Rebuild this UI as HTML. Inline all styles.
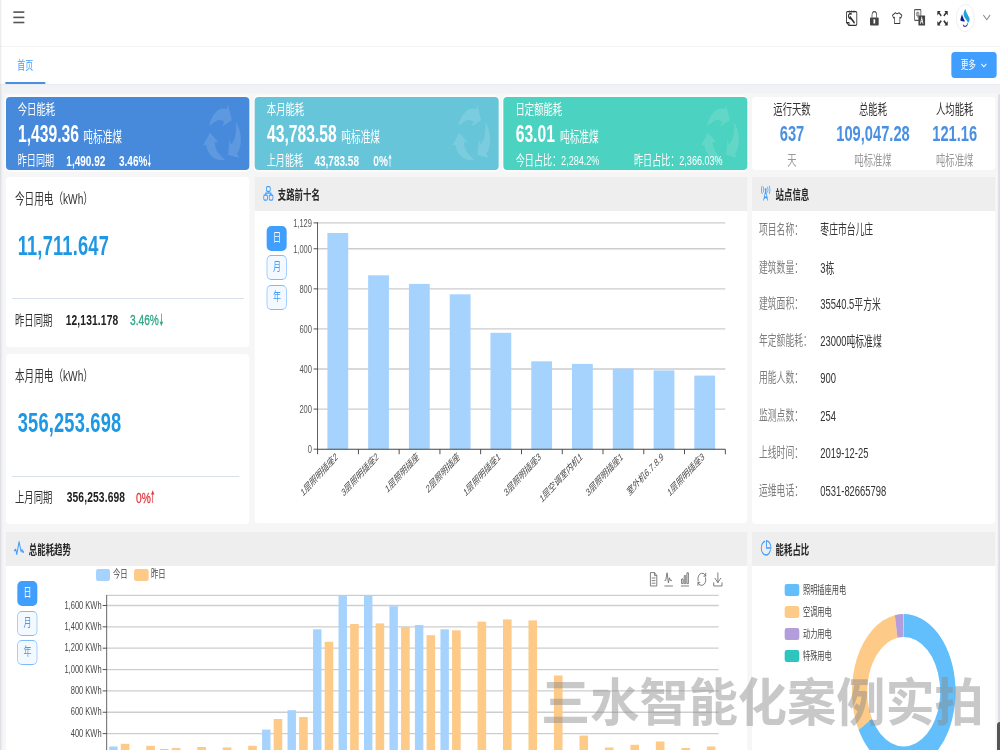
<!DOCTYPE html>
<html lang="zh-CN"><head><meta charset="utf-8"><title>首页</title>
<style>
html,body{margin:0;padding:0;}
body{width:1000px;height:750px;overflow:hidden;position:relative;background:#f0f2f5;
  font-family:"Liberation Sans","Noto Sans CJK SC",sans-serif;font-size:12px;color:#333;}
#stage{filter:blur(0.4px);position:absolute;left:0;top:0;width:1500px;height:750px;overflow:hidden;
  transform:scaleX(0.666667);transform-origin:0 0;background:#f0f2f5;}
svg.ar{height:.88em;width:.4em;vertical-align:-.09em;display:inline-block;overflow:visible;margin-left:.02em;}
.abs{position:absolute;}
.t{position:absolute;white-space:nowrap;}
.b{font-weight:bold;}
.hd{font-weight:bold;}
/* top bar */
.topbar{position:absolute;left:0;top:0;width:1500px;height:47px;background:#fff;border-bottom:1px solid #f5f5f5;box-sizing:border-box;}
.tabbar{position:absolute;left:0;top:47px;width:1500px;height:37px;background:#fff;box-shadow:0 1px 0 #e9ebef;}
.leftline{position:absolute;left:0;top:0;width:1.6px;height:750px;background:rgba(0,0,0,.075);}
.inner{position:absolute;left:5.2px;top:92.8px;width:1491px;height:660px;background:#f6f6f6;}
.tabline{position:absolute;left:8px;top:35px;width:60px;height:2px;background:#4a8fe0;}
.more{position:absolute;left:1427px;top:5px;width:68px;height:26px;border-radius:5px/4px;background:#409eff;color:#fff;}
/* panels */
.card{position:absolute;border-radius:6px/4px;box-shadow:0 0 0 2px rgba(255,255,255,.7);}
.panel{position:absolute;background:#fff;border-radius:6px/4px;overflow:hidden;}
.phead{position:absolute;left:0;top:0;right:0;height:34px;background:#eee;}
.hr{position:absolute;height:1px;background:#d9e0ea;}
.btn{position:absolute;width:30px;height:25px;border-radius:7px/5px;box-sizing:border-box;text-align:center;line-height:24px;font-size:12px;}
.btn.on{background:#409eff;color:#fff;}
.btn.off{background:#f3f9ff;color:#409eff;border:1.2px solid #7dbbff;line-height:22px;}
/* overlays */
.wm{position:absolute;left:541.1px;top:678.2px;transform:scaleY(1.035);transform-origin:0 0;font-size:49.2px;line-height:1;font-weight:bold;font-family:"Liberation Sans","Noto Sans CJK SC",sans-serif;color:rgba(140,140,140,.48);white-space:nowrap;}
.sbtrack{position:absolute;left:997.6px;top:94px;width:3px;height:660px;background:linear-gradient(90deg,#e2e4e8,#d4d8de);border-radius:2px 0 0 0;}
.sbthumb{position:absolute;left:997px;top:722px;width:6px;height:40px;background:#555;border-radius:3px;}

</style></head>
<body>
<div id="stage">
<div class="inner"></div>
<header><div class="topbar"></div><svg style="position:absolute;left:19.8px;top:10.0px;overflow:visible;" width="17" height="14" viewBox="0 0 17 14"><g fill="#555"><rect x="0" y="1.3" width="16.5" height="1.6"/><rect x="0" y="6.6" width="16.5" height="1.6"/><rect x="0" y="11.7" width="16.5" height="1.6"/></g></svg><svg style="position:absolute;left:1268.8px;top:9.6px;overflow:visible;" width="17" height="16" viewBox="0 0 17 16"><g fill="none" stroke="#333" stroke-width="1.3" stroke-linejoin="round"><path d="M2.2 1.6 H14.6 Q16.2 1.6 16.2 3 V14 Q16.2 15.4 14.6 15.4 H4.6 L0.8 12.6 V3 Q0.8 1.6 2.2 1.6Z"/><path d="M0.8 12.6 H4.6 V15.4"/><path d="M5 0.4v2.2M8.5 0.4v2.2M12 0.4v2.2" stroke-width="1.1"/><path d="M6.4 7.2 L12.2 12.6" stroke-width="2.1" stroke-linecap="round"/><path d="M8.4 4.4 A2.7 2.4 0 1 0 7.6 8.2" stroke-width="1.7"/></g></svg><svg style="position:absolute;left:1304.5px;top:10.6px;overflow:visible;" width="13" height="14.4" viewBox="0 0 13 14.4"><path d="M3 6.6 V4.6 Q3 0.7 6.5 0.7 Q10 0.7 10 4.6 V6.6" fill="none" stroke="#444" stroke-width="1.15"/><rect x="0" y="6.4" width="13" height="8" rx="0.8" fill="#444"/><rect x="5.2" y="8.3" width="2.6" height="4.2" fill="#fff"/></svg><svg style="position:absolute;left:1337.7px;top:11.6px;overflow:visible;" width="15.6" height="12.2" viewBox="0 0 15.6 12.2"><path d="M5.2 0.7 Q7.8 2.6 10.4 0.7 L14.9 3.2 L13.3 6 L11.8 5.3 V11.5 H3.8 V5.3 L2.3 6 L0.7 3.2 Z" fill="none" stroke="#333" stroke-width="1.05" stroke-linejoin="round"/></svg><svg style="position:absolute;left:1371.0px;top:9.2px;overflow:visible;" width="16.6" height="16.6" viewBox="0 0 16.6 16.6"><rect x="0.7" y="0.7" width="9.6" height="10.6" rx="0.8" fill="#fff" stroke="#555" stroke-width="1.2"/><path d="M5.5 2.6v6M3.6 3.6h3.8v3H3.6z" fill="none" stroke="#777" stroke-width="0.9"/><rect x="6.6" y="6.6" width="10" height="10" rx="0.6" fill="#444"/><path d="M9.6 14.8 L11.6 8.8 L13.6 14.8 M10.3 12.8 H12.9" fill="none" stroke="#fff" stroke-width="1.1"/></svg><svg style="position:absolute;left:1405.5px;top:10.5px;overflow:visible;" width="15.6" height="14.6" viewBox="0 0 15.6 14.6"><g fill="#333"><path d="M0 0 H5 L3.4 1.4 L6.6 4.2 L5.2 5.6 L2 2.8 L0 4.6 Z"/><path d="M0 0 H5 L3.4 1.4 L6.6 4.2 L5.2 5.6 L2 2.8 L0 4.6 Z" transform="translate(15.6,0) scale(-1,1)"/><path d="M0 0 H5 L3.4 1.4 L6.6 4.2 L5.2 5.6 L2 2.8 L0 4.6 Z" transform="translate(0,14.6) scale(1,-1)"/><path d="M0 0 H5 L3.4 1.4 L6.6 4.2 L5.2 5.6 L2 2.8 L0 4.6 Z" transform="translate(15.6,14.6) scale(-1,-1)"/></g></svg><svg style="position:absolute;left:1434.4px;top:3.7px;overflow:visible;" width="28" height="28" viewBox="0 0 28 28"><circle cx="14" cy="14.05" r="13.6" fill="#fff" stroke="#ececf1" stroke-width="1"/><path d="M14.15 4.7C11.5 7.5 10.6 10 12.2 12.6C13.5 14.6 16.5 16.5 18.05 18.9C19.6 18 20.8 16.8 20.3 14.8C19.6 12 15.4 9.5 14.15 4.7Z" fill="#1fa2de"/><path d="M9.05 10.2C8 12 6.8 14.5 6.5 16.5C8.5 17.3 11 17.6 13.4 17.4C12.5 15.5 10.2 13.5 9.05 10.2Z" fill="#17188a"/><path d="M16.9 19.3A3.3 2.4 0 1 1 10.5 20.6" fill="none" stroke="#2a2a95" stroke-width="1.1"/></svg><svg style="position:absolute;left:1474.6px;top:15.0px;overflow:visible;" width="10.3" height="5" viewBox="0 0 10.3 5"><path d="M0 0 L5.15 4.8 L10.3 0" fill="none" stroke="#888" stroke-width="1.2"/></svg></header><nav><div class="tabbar"><div class="tabline"></div><div class="more"></div></div><div class="t" style="left:26.0px;top:58.2px;font-size:12px;line-height:17px;color:#409eff;">首页</div><div class="t" style="left:1441.0px;top:57.0px;font-size:11.5px;line-height:16px;color:#fff;">更多</div><svg style="position:absolute;left:1471.5px;top:63.6px;overflow:visible;" width="7.6" height="3" viewBox="0 0 7.6 3"><path d="M0 0 L3.8 2.8 L7.6 0" fill="none" stroke="#fff" stroke-width="1.1"/></svg></nav><section class="stats"><div class="card" style="position:absolute;left:8.5px;top:97.0px;width:365.5px;height:72.5px;background:#478adc;"></div><svg style="position:absolute;left:335.0px;top:136.0px;overflow:visible;" width="1" height="1" viewBox="0 0 1 1"><g fill="#fff" fill-opacity=".13"><path d="M-21.5,-9.7 C-20,-16 -14,-23 -8.4,-25.6 C-4,-27.6 1,-28 5.1,-26.6 L7,-31.2 L12.8,-15.8 L-2,-9.4 L1.6,-14.1 C-3,-16.6 -8,-16.6 -13,-14.1 C-16,-13 -19,-11.5 -21.5,-9.7 Z" transform="rotate(0)"/><path d="M-21.5,-9.7 C-20,-16 -14,-23 -8.4,-25.6 C-4,-27.6 1,-28 5.1,-26.6 L7,-31.2 L12.8,-15.8 L-2,-9.4 L1.6,-14.1 C-3,-16.6 -8,-16.6 -13,-14.1 C-16,-13 -19,-11.5 -21.5,-9.7 Z" transform="rotate(120)"/><path d="M-21.5,-9.7 C-20,-16 -14,-23 -8.4,-25.6 C-4,-27.6 1,-28 5.1,-26.6 L7,-31.2 L12.8,-15.8 L-2,-9.4 L1.6,-14.1 C-3,-16.6 -8,-16.6 -13,-14.1 C-16,-13 -19,-11.5 -21.5,-9.7 Z" transform="rotate(240)"/></g></svg><div class="t" style="left:26.7px;top:99.0px;font-size:14px;line-height:20px;color:#fff;">今日能耗</div><div class="t" style="left:27.0px;top:117.9px;font-size:23.5px;line-height:33px;color:#fff;font-weight:bold;">1,439.36</div><div class="t" style="left:125.0px;top:127.0px;font-size:14.5px;line-height:20px;color:#fff;">吨标准煤</div><div class="t" style="left:26.7px;top:150.7px;font-size:13.6px;line-height:19px;color:#fff;">昨日同期</div><div class="t" style="left:99.5px;top:149.7px;font-size:15px;line-height:21px;color:#fff;font-weight:bold;">1,490.92</div><div class="t" style="left:178.5px;top:149.7px;font-size:15px;line-height:21px;color:#fff;font-weight:bold;">3.46%<svg class="ar" viewBox="0 0 6 13" role="img" aria-label="↓"><title>↓</title><path d="M3 0.3V10.5" fill="none" stroke="currentColor" stroke-width="1.1"/><path d="M0.5 8.6H5.5L3 12.8Z" fill="currentColor"/></svg></div><div class="card" style="position:absolute;left:382.0px;top:97.0px;width:365.5px;height:72.5px;background:#67c5da;"></div><svg style="position:absolute;left:708.5px;top:136.0px;overflow:visible;" width="1" height="1" viewBox="0 0 1 1"><g fill="#fff" fill-opacity=".13"><path d="M-21.5,-9.7 C-20,-16 -14,-23 -8.4,-25.6 C-4,-27.6 1,-28 5.1,-26.6 L7,-31.2 L12.8,-15.8 L-2,-9.4 L1.6,-14.1 C-3,-16.6 -8,-16.6 -13,-14.1 C-16,-13 -19,-11.5 -21.5,-9.7 Z" transform="rotate(0)"/><path d="M-21.5,-9.7 C-20,-16 -14,-23 -8.4,-25.6 C-4,-27.6 1,-28 5.1,-26.6 L7,-31.2 L12.8,-15.8 L-2,-9.4 L1.6,-14.1 C-3,-16.6 -8,-16.6 -13,-14.1 C-16,-13 -19,-11.5 -21.5,-9.7 Z" transform="rotate(120)"/><path d="M-21.5,-9.7 C-20,-16 -14,-23 -8.4,-25.6 C-4,-27.6 1,-28 5.1,-26.6 L7,-31.2 L12.8,-15.8 L-2,-9.4 L1.6,-14.1 C-3,-16.6 -8,-16.6 -13,-14.1 C-16,-13 -19,-11.5 -21.5,-9.7 Z" transform="rotate(240)"/></g></svg><div class="t" style="left:400.2px;top:99.0px;font-size:14px;line-height:20px;color:#fff;">本月能耗</div><div class="t" style="left:400.5px;top:117.9px;font-size:23.5px;line-height:33px;color:#fff;font-weight:bold;">43,783.58</div><div class="t" style="left:512.0px;top:127.0px;font-size:14.5px;line-height:20px;color:#fff;">吨标准煤</div><div class="t" style="left:400.2px;top:150.7px;font-size:13.6px;line-height:19px;color:#fff;">上月能耗</div><div class="t" style="left:471.7px;top:149.7px;font-size:15px;line-height:21px;color:#fff;font-weight:bold;">43,783.58</div><div class="t" style="left:560.0px;top:149.7px;font-size:15px;line-height:21px;color:#fff;font-weight:bold;">0%<svg class="ar" viewBox="0 0 6 13" role="img" aria-label="↑"><title>↑</title><path d="M3 12.7V2.5" fill="none" stroke="currentColor" stroke-width="1.1"/><path d="M0.5 4.4H5.5L3 0.2Z" fill="currentColor"/></svg></div><div class="card" style="position:absolute;left:755.0px;top:97.0px;width:365.5px;height:72.5px;background:#4bd2c0;"></div><svg style="position:absolute;left:1081.5px;top:136.0px;overflow:visible;" width="1" height="1" viewBox="0 0 1 1"><g fill="#fff" fill-opacity=".13"><path d="M-21.5,-9.7 C-20,-16 -14,-23 -8.4,-25.6 C-4,-27.6 1,-28 5.1,-26.6 L7,-31.2 L12.8,-15.8 L-2,-9.4 L1.6,-14.1 C-3,-16.6 -8,-16.6 -13,-14.1 C-16,-13 -19,-11.5 -21.5,-9.7 Z" transform="rotate(0)"/><path d="M-21.5,-9.7 C-20,-16 -14,-23 -8.4,-25.6 C-4,-27.6 1,-28 5.1,-26.6 L7,-31.2 L12.8,-15.8 L-2,-9.4 L1.6,-14.1 C-3,-16.6 -8,-16.6 -13,-14.1 C-16,-13 -19,-11.5 -21.5,-9.7 Z" transform="rotate(120)"/><path d="M-21.5,-9.7 C-20,-16 -14,-23 -8.4,-25.6 C-4,-27.6 1,-28 5.1,-26.6 L7,-31.2 L12.8,-15.8 L-2,-9.4 L1.6,-14.1 C-3,-16.6 -8,-16.6 -13,-14.1 C-16,-13 -19,-11.5 -21.5,-9.7 Z" transform="rotate(240)"/></g></svg><div class="t" style="left:773.2px;top:99.0px;font-size:14px;line-height:20px;color:#fff;">日定额能耗</div><div class="t" style="left:773.5px;top:117.9px;font-size:23.5px;line-height:33px;color:#fff;font-weight:bold;">63.01</div><div class="t" style="left:840.0px;top:127.0px;font-size:14.5px;line-height:20px;color:#fff;">吨标准煤</div><div class="t" style="left:773.7px;top:150.7px;font-size:13.6px;line-height:19px;color:#fff;">今日占比：2,284.2%</div><div class="t" style="left:951.0px;top:150.7px;font-size:13.6px;line-height:19px;color:#fff;">昨日占比：2,366.03%</div><div class="panel" style="position:absolute;left:1128.0px;top:97.0px;width:364.5px;height:72.5px;"></div><div class="t" style="left:1188.0px;top:99.0px;font-size:14px;line-height:20px;color:#333;transform:translateX(-50%);">运行天数</div><div class="t" style="left:1188.0px;top:118.0px;font-size:22px;line-height:31px;color:#4a90e2;font-weight:bold;transform:translateX(-50%);">637</div><div class="t" style="left:1188.0px;top:150.0px;font-size:14px;line-height:20px;color:#999;transform:translateX(-50%);">天</div><div class="t" style="left:1309.5px;top:99.0px;font-size:14px;line-height:20px;color:#333;transform:translateX(-50%);">总能耗</div><div class="t" style="left:1309.5px;top:118.0px;font-size:22px;line-height:31px;color:#4a90e2;font-weight:bold;transform:translateX(-50%);">109,047.28</div><div class="t" style="left:1309.5px;top:150.0px;font-size:14px;line-height:20px;color:#999;transform:translateX(-50%);">吨标准煤</div><div class="t" style="left:1432.0px;top:99.0px;font-size:14px;line-height:20px;color:#333;transform:translateX(-50%);">人均能耗</div><div class="t" style="left:1432.0px;top:118.0px;font-size:22px;line-height:31px;color:#4a90e2;font-weight:bold;transform:translateX(-50%);">121.16</div><div class="t" style="left:1432.0px;top:150.0px;font-size:14px;line-height:20px;color:#999;transform:translateX(-50%);">吨标准煤</div></section>
<main>
<section class="elec"><div class="panel" style="position:absolute;left:8.5px;top:177.0px;width:365.5px;height:170.0px;"></div><div class="t" style="left:22.5px;top:188.6px;font-size:14.4px;line-height:20px;color:#333;">今日用电（<span style="font-size:106%">kWh</span>）</div><div class="t" style="left:26.5px;top:226.5px;font-size:27.4px;line-height:38px;color:#1e98e4;font-weight:bold;letter-spacing:.3px;">11,711.647</div><div class="hr" style="position:absolute;left:18.0px;top:298.4px;width:348.0px;height:1.0px;"></div><div class="t" style="left:22.5px;top:309.5px;font-size:14px;line-height:20px;color:#333;">昨日同期</div><div class="t" style="left:98.5px;top:308.5px;font-size:15.4px;line-height:22px;color:#222;font-weight:bold;letter-spacing:.2px;">12,131.178</div><div class="t" style="left:195.0px;top:309.0px;font-size:15.3px;line-height:21px;color:#2ea583;-webkit-text-stroke:0.3px #2ea583;">3.46%<svg class="ar" viewBox="0 0 6 13" role="img" aria-label="↓"><title>↓</title><path d="M3 0.3V10.5" fill="none" stroke="currentColor" stroke-width="1.1"/><path d="M0.5 8.6H5.5L3 12.8Z" fill="currentColor"/></svg></div><div class="panel" style="position:absolute;left:8.5px;top:354.0px;width:365.5px;height:170.0px;"></div><div class="t" style="left:22.5px;top:366.0px;font-size:14.4px;line-height:20px;color:#333;">本月用电（<span style="font-size:106%">kWh</span>）</div><div class="t" style="left:26.5px;top:404.0px;font-size:27.4px;line-height:38px;color:#1e98e4;font-weight:bold;letter-spacing:.3px;">356,253.698</div><div class="hr" style="position:absolute;left:18.0px;top:476.2px;width:341.4px;height:1.0px;"></div><div class="t" style="left:22.5px;top:487.0px;font-size:14px;line-height:20px;color:#333;">上月同期</div><div class="t" style="left:100.0px;top:486.0px;font-size:15.4px;line-height:22px;color:#222;font-weight:bold;letter-spacing:.2px;">356,253.698</div><div class="t" style="left:204.0px;top:486.5px;font-size:15.3px;line-height:21px;color:#e0393e;-webkit-text-stroke:0.3px #e0393e;">0%<svg class="ar" viewBox="0 0 6 13" role="img" aria-label="↑"><title>↑</title><path d="M3 12.7V2.5" fill="none" stroke="currentColor" stroke-width="1.1"/><path d="M0.5 4.4H5.5L3 0.2Z" fill="currentColor"/></svg></div></section><section class="top10"><div class="panel" style="position:absolute;left:381.6px;top:177.3px;width:739.0px;height:346.0px;"></div><div class="" style="position:absolute;left:381.6px;top:177.3px;width:739.0px;height:33.6px;background:#eee;border-radius:6px/4px 6px/4px 0 0;"></div><svg style="position:absolute;left:394.5px;top:186.0px;overflow:visible;" width="15" height="14.8" viewBox="0 0 15 14.8"><g fill="none" stroke="#409eff" stroke-width="1.3"><rect x="4.6" y="0.6" width="5.8" height="4.8" rx="1.6"/><rect x="0.6" y="9" width="5.6" height="5.2" rx="1.6"/><rect x="8.8" y="9" width="5.6" height="5.2" rx="1.6"/><path d="M7.5 5.4V7.2M3.4 9V7.2H11.6V9"/></g></svg><div class="t hd" style="left:416.7px;top:185.6px;font-size:12.6px;line-height:18px;color:#262626;">支路前十名</div><div class="btn on" style="left:400.4px;top:225.9px;">日</div><div class="btn off" style="left:400.4px;top:255.4px;">月</div><div class="btn off" style="left:400.4px;top:285.1px;">年</div><svg style="position:absolute;left:0;top:0;overflow:visible" width="1500" height="750"><path d="M476.4 409.11H1088.0" stroke="#cdcdd0" stroke-width="1.3"/><path d="M476.4 369.02H1088.0" stroke="#cdcdd0" stroke-width="1.3"/><path d="M476.4 328.93H1088.0" stroke="#cdcdd0" stroke-width="1.3"/><path d="M476.4 288.85H1088.0" stroke="#cdcdd0" stroke-width="1.3"/><path d="M476.4 248.76H1088.0" stroke="#cdcdd0" stroke-width="1.3"/><path d="M476.4 222.90H1088.0" stroke="#cdcdd0" stroke-width="1.3"/><rect x="491.1" y="233.0" width="31.2" height="216.2" fill="#a6d3fd"/><rect x="552.2" y="275.3" width="31.2" height="173.9" fill="#a6d3fd"/><rect x="613.4" y="283.9" width="31.2" height="165.3" fill="#a6d3fd"/><rect x="674.6" y="294.3" width="31.2" height="154.9" fill="#a6d3fd"/><rect x="735.7" y="332.8" width="31.2" height="116.4" fill="#a6d3fd"/><rect x="796.9" y="361.3" width="31.2" height="87.9" fill="#a6d3fd"/><rect x="858.0" y="363.9" width="31.2" height="85.3" fill="#a6d3fd"/><rect x="919.2" y="368.6" width="31.2" height="80.6" fill="#a6d3fd"/><rect x="980.4" y="370.4" width="31.2" height="78.8" fill="#a6d3fd"/><rect x="1041.5" y="375.6" width="31.2" height="73.6" fill="#a6d3fd"/><path d="M476.4 222.3V449.8" stroke="#444" stroke-width="1.3"/><path d="M476.4 449.2H1088.0" stroke="#444" stroke-width="1.1"/><path d="M470.4 449.20H476.4" stroke="#333" stroke-width="1"/><path d="M470.4 409.11H476.4" stroke="#333" stroke-width="1"/><path d="M470.4 369.02H476.4" stroke="#333" stroke-width="1"/><path d="M470.4 328.93H476.4" stroke="#333" stroke-width="1"/><path d="M470.4 288.85H476.4" stroke="#333" stroke-width="1"/><path d="M470.4 248.76H476.4" stroke="#333" stroke-width="1"/><path d="M470.4 222.90H476.4" stroke="#333" stroke-width="1"/><path d="M476.4 449.2V454.2" stroke="#444" stroke-width="1.4"/><path d="M537.6 449.2V454.2" stroke="#444" stroke-width="1.4"/><path d="M598.7 449.2V454.2" stroke="#444" stroke-width="1.4"/><path d="M659.9 449.2V454.2" stroke="#444" stroke-width="1.4"/><path d="M721.0 449.2V454.2" stroke="#444" stroke-width="1.4"/><path d="M782.2 449.2V454.2" stroke="#444" stroke-width="1.4"/><path d="M843.4 449.2V454.2" stroke="#444" stroke-width="1.4"/><path d="M904.5 449.2V454.2" stroke="#444" stroke-width="1.4"/><path d="M965.7 449.2V454.2" stroke="#444" stroke-width="1.4"/><path d="M1026.8 449.2V454.2" stroke="#444" stroke-width="1.4"/><path d="M1088.0 449.2V454.2" stroke="#444" stroke-width="1.4"/></svg><div class="t" style="left:468.0px;top:441.2px;font-size:11.3px;line-height:16px;color:#555;transform:translateX(-100%);">0</div><div class="t" style="left:468.0px;top:401.1px;font-size:11.3px;line-height:16px;color:#555;transform:translateX(-100%);">200</div><div class="t" style="left:468.0px;top:361.0px;font-size:11.3px;line-height:16px;color:#555;transform:translateX(-100%);">400</div><div class="t" style="left:468.0px;top:320.9px;font-size:11.3px;line-height:16px;color:#555;transform:translateX(-100%);">600</div><div class="t" style="left:468.0px;top:280.8px;font-size:11.3px;line-height:16px;color:#555;transform:translateX(-100%);">800</div><div class="t" style="left:468.0px;top:240.8px;font-size:11.3px;line-height:16px;color:#555;transform:translateX(-100%);">1,000</div><div class="t" style="left:468.0px;top:214.9px;font-size:11.3px;line-height:16px;color:#555;transform:translateX(-100%);">1,129</div><div class="t" style="left:504.6px;top:455.4px;font-size:10.7px;line-height:14px;color:#484848;transform:translate(-100%,-50%) rotate(-36deg);transform-origin:100% 50%;">1层照明插座2</div><div class="t" style="left:565.7px;top:455.4px;font-size:10.7px;line-height:14px;color:#484848;transform:translate(-100%,-50%) rotate(-36deg);transform-origin:100% 50%;">3层照明插座2</div><div class="t" style="left:626.9px;top:455.4px;font-size:10.7px;line-height:14px;color:#484848;transform:translate(-100%,-50%) rotate(-36deg);transform-origin:100% 50%;">1层照明插座</div><div class="t" style="left:688.1px;top:455.4px;font-size:10.7px;line-height:14px;color:#484848;transform:translate(-100%,-50%) rotate(-36deg);transform-origin:100% 50%;">2层照明插座</div><div class="t" style="left:749.2px;top:455.4px;font-size:10.7px;line-height:14px;color:#484848;transform:translate(-100%,-50%) rotate(-36deg);transform-origin:100% 50%;">1层照明插座1</div><div class="t" style="left:810.4px;top:455.4px;font-size:10.7px;line-height:14px;color:#484848;transform:translate(-100%,-50%) rotate(-36deg);transform-origin:100% 50%;">3层照明插座3</div><div class="t" style="left:871.5px;top:455.4px;font-size:10.7px;line-height:14px;color:#484848;transform:translate(-100%,-50%) rotate(-36deg);transform-origin:100% 50%;">1层空调室内机1</div><div class="t" style="left:932.7px;top:455.4px;font-size:10.7px;line-height:14px;color:#484848;transform:translate(-100%,-50%) rotate(-36deg);transform-origin:100% 50%;">3层照明插座1</div><div class="t" style="left:993.9px;top:455.4px;font-size:10.7px;line-height:14px;color:#484848;transform:translate(-100%,-50%) rotate(-36deg);transform-origin:100% 50%;">室外机6.7.8.9</div><div class="t" style="left:1055.0px;top:455.4px;font-size:10.7px;line-height:14px;color:#484848;transform:translate(-100%,-50%) rotate(-36deg);transform-origin:100% 50%;">1层照明插座3</div></section><section class="site"><div class="panel" style="position:absolute;left:1128.0px;top:177.2px;width:364.5px;height:346.4px;"></div><div class="" style="position:absolute;left:1128.0px;top:177.2px;width:364.5px;height:33.6px;background:#eee;border-radius:6px/4px 6px/4px 0 0;"></div><svg style="position:absolute;left:1141.0px;top:186.0px;overflow:visible;" width="15" height="14.6" viewBox="0 0 15 14.6"><g fill="none" stroke="#409eff" stroke-width="1.1" stroke-linecap="round"><path d="M7.5 4.4 L4.4 14.2 M7.5 4.4 L10.6 14.2 M5.6 10.4 L10 12.6 M9.4 10.4 L5 12.6 M6.4 7.8H8.6"/><circle cx="7.5" cy="3.6" r="0.9" fill="#409eff"/><path d="M4.6 1.2 Q3.2 3.6 4.6 6 M10.4 1.2 Q11.8 3.6 10.4 6"/><path d="M2.2 0.2 Q-0.2 3.6 2.2 7.4 M12.8 0.2 Q15.2 3.6 12.8 7.4"/></g></svg><div class="t hd" style="left:1163.4px;top:185.6px;font-size:12.6px;line-height:18px;color:#262626;">站点信息</div><div class="t" style="left:1138.5px;top:221.4px;font-size:13.2px;line-height:18px;color:#7c7c7c;">项目名称：</div><div class="t" style="left:1230.5px;top:221.4px;font-size:13.2px;line-height:18px;color:#333;">枣庄市台儿庄</div><div class="t" style="left:1138.5px;top:258.7px;font-size:13.2px;line-height:18px;color:#7c7c7c;">建筑数量：</div><div class="t" style="left:1230.5px;top:258.7px;font-size:13.2px;line-height:18px;color:#333;"><span style="font-size:107%">3</span>栋</div><div class="t" style="left:1138.5px;top:295.2px;font-size:13.2px;line-height:18px;color:#7c7c7c;">建筑面积：</div><div class="t" style="left:1230.5px;top:295.2px;font-size:13.2px;line-height:18px;color:#333;"><span style="font-size:107%">35540.5</span>平方米</div><div class="t" style="left:1138.5px;top:332.0px;font-size:13.2px;line-height:18px;color:#7c7c7c;">年定额能耗：</div><div class="t" style="left:1230.5px;top:332.0px;font-size:13.2px;line-height:18px;color:#333;"><span style="font-size:107%">23000</span>吨标准煤</div><div class="t" style="left:1138.5px;top:369.0px;font-size:13.2px;line-height:18px;color:#7c7c7c;">用能人数：</div><div class="t" style="left:1230.5px;top:369.0px;font-size:13.2px;line-height:18px;color:#333;"><span style="font-size:107%">900</span></div><div class="t" style="left:1138.5px;top:406.5px;font-size:13.2px;line-height:18px;color:#7c7c7c;">监测点数：</div><div class="t" style="left:1230.5px;top:406.5px;font-size:13.2px;line-height:18px;color:#333;"><span style="font-size:107%">254</span></div><div class="t" style="left:1138.5px;top:443.7px;font-size:13.2px;line-height:18px;color:#7c7c7c;">上线时间：</div><div class="t" style="left:1230.5px;top:443.7px;font-size:13.2px;line-height:18px;color:#333;"><span style="font-size:107%">2019-12-25</span></div><div class="t" style="left:1138.5px;top:481.7px;font-size:13.2px;line-height:18px;color:#7c7c7c;">运维电话：</div><div class="t" style="left:1230.5px;top:481.7px;font-size:13.2px;line-height:18px;color:#333;"><span style="font-size:107%">0531-82665798</span></div></section>
<section class="trend"><div class="panel" style="position:absolute;left:8.5px;top:532.0px;width:1112.0px;height:230.0px;"></div><div class="" style="position:absolute;left:8.5px;top:532.0px;width:1112.0px;height:33.7px;background:#eee;border-radius:6px/4px 6px/4px 0 0;"></div><svg style="position:absolute;left:21.3px;top:541.0px;overflow:visible;" width="15" height="14" viewBox="0 0 15 14"><path d="M0.6 9.6 L2.6 8.4 L4.2 13.2 L7.6 0.8 L10.6 10.6 L12 8.6 L13.4 10.8" fill="none" stroke="#409eff" stroke-width="1.5" stroke-linejoin="round" stroke-linecap="round"/><circle cx="13.8" cy="10.9" r="1.1" fill="#409eff"/></svg><div class="t hd" style="left:43.3px;top:541.1px;font-size:12.6px;line-height:18px;color:#262626;">总能耗趋势</div><div class="btn on" style="left:26.3px;top:580.7px;">日</div><div class="btn off" style="left:26.3px;top:610.5px;">月</div><div class="btn off" style="left:26.3px;top:640.1px;">年</div><div class="" style="position:absolute;left:143.5px;top:569.0px;width:21.2px;height:11.8px;background:#a6d3fd;border-radius:3px;"></div><div class="t" style="left:169.5px;top:567.1px;font-size:11px;line-height:15px;color:#444;">今日</div><div class="" style="position:absolute;left:200.5px;top:569.0px;width:22.2px;height:11.8px;background:#fdca88;border-radius:3px;"></div><div class="t" style="left:226.5px;top:567.1px;font-size:11px;line-height:15px;color:#444;">昨日</div><svg style="position:absolute;left:0;top:0;overflow:visible" width="1500" height="750"><path d="M160.0 595.3H1078.0" stroke="#cdcdd0" stroke-width="1.3"/><path d="M160.0 733.60H1078.0" stroke="#cdcdd0" stroke-width="1.3"/><path d="M160.0 712.25H1078.0" stroke="#cdcdd0" stroke-width="1.3"/><path d="M160.0 690.90H1078.0" stroke="#cdcdd0" stroke-width="1.3"/><path d="M160.0 669.55H1078.0" stroke="#cdcdd0" stroke-width="1.3"/><path d="M160.0 648.20H1078.0" stroke="#cdcdd0" stroke-width="1.3"/><path d="M160.0 626.85H1078.0" stroke="#cdcdd0" stroke-width="1.3"/><path d="M160.0 605.50H1078.0" stroke="#cdcdd0" stroke-width="1.3"/><rect x="163.8" y="746.5" width="12.6" height="13.5" fill="#a6d3fd"/><rect x="240.2" y="749.0" width="12.6" height="11.0" fill="#a6d3fd"/><rect x="393.1" y="729.6" width="12.6" height="30.4" fill="#a6d3fd"/><rect x="431.3" y="710.2" width="12.6" height="49.8" fill="#a6d3fd"/><rect x="469.6" y="629.3" width="12.6" height="130.7" fill="#a6d3fd"/><rect x="507.8" y="595.3" width="12.6" height="164.7" fill="#a6d3fd"/><rect x="546.0" y="595.3" width="12.6" height="164.7" fill="#a6d3fd"/><rect x="584.2" y="606.2" width="12.6" height="153.8" fill="#a6d3fd"/><rect x="622.4" y="625.0" width="12.6" height="135.0" fill="#a6d3fd"/><rect x="660.7" y="629.3" width="12.6" height="130.7" fill="#a6d3fd"/><rect x="181.2" y="743.8" width="12.9" height="16.2" fill="#fdca88"/><rect x="219.4" y="745.8" width="12.9" height="14.2" fill="#fdca88"/><rect x="257.6" y="748.0" width="12.9" height="12.0" fill="#fdca88"/><rect x="295.9" y="747.0" width="12.9" height="13.0" fill="#fdca88"/><rect x="334.1" y="747.5" width="12.9" height="12.5" fill="#fdca88"/><rect x="372.3" y="745.8" width="12.9" height="14.2" fill="#fdca88"/><rect x="410.5" y="719.0" width="12.9" height="41.0" fill="#fdca88"/><rect x="448.7" y="717.0" width="12.9" height="43.0" fill="#fdca88"/><rect x="487.0" y="641.8" width="12.9" height="118.2" fill="#fdca88"/><rect x="525.2" y="624.0" width="12.9" height="136.0" fill="#fdca88"/><rect x="563.4" y="623.4" width="12.9" height="136.6" fill="#fdca88"/><rect x="601.6" y="627.0" width="12.9" height="133.0" fill="#fdca88"/><rect x="639.8" y="635.2" width="12.9" height="124.8" fill="#fdca88"/><rect x="678.1" y="630.3" width="12.9" height="129.7" fill="#fdca88"/><rect x="716.3" y="621.7" width="12.9" height="138.3" fill="#fdca88"/><rect x="754.5" y="619.4" width="12.9" height="140.6" fill="#fdca88"/><rect x="792.7" y="620.4" width="12.9" height="139.6" fill="#fdca88"/><rect x="830.9" y="675.5" width="12.9" height="84.5" fill="#fdca88"/><rect x="869.2" y="735.6" width="12.9" height="24.4" fill="#fdca88"/><rect x="907.4" y="747.5" width="12.9" height="12.5" fill="#fdca88"/><rect x="945.6" y="744.8" width="12.9" height="15.2" fill="#fdca88"/><rect x="983.8" y="741.5" width="12.9" height="18.5" fill="#fdca88"/><rect x="1022.0" y="748.0" width="12.9" height="12.0" fill="#fdca88"/><rect x="1060.3" y="746.5" width="12.9" height="13.5" fill="#fdca88"/><path d="M160.0 595V760" stroke="#666" stroke-width="1.5"/><path d="M154.0 733.60H160.0" stroke="#333" stroke-width="1"/><path d="M154.0 712.25H160.0" stroke="#333" stroke-width="1"/><path d="M154.0 690.90H160.0" stroke="#333" stroke-width="1"/><path d="M154.0 669.55H160.0" stroke="#333" stroke-width="1"/><path d="M154.0 648.20H160.0" stroke="#333" stroke-width="1"/><path d="M154.0 626.85H160.0" stroke="#333" stroke-width="1"/><path d="M154.0 605.50H160.0" stroke="#333" stroke-width="1"/></svg><div class="t" style="left:152.5px;top:724.6px;font-size:11.3px;line-height:16px;color:#4a4a4a;transform:translateX(-100%);">400 KWh</div><div class="t" style="left:152.5px;top:703.2px;font-size:11.3px;line-height:16px;color:#4a4a4a;transform:translateX(-100%);">600 KWh</div><div class="t" style="left:152.5px;top:681.9px;font-size:11.3px;line-height:16px;color:#4a4a4a;transform:translateX(-100%);">800 KWh</div><div class="t" style="left:152.5px;top:660.5px;font-size:11.3px;line-height:16px;color:#4a4a4a;transform:translateX(-100%);">1,000 KWh</div><div class="t" style="left:152.5px;top:639.2px;font-size:11.3px;line-height:16px;color:#4a4a4a;transform:translateX(-100%);">1,200 KWh</div><div class="t" style="left:152.5px;top:617.9px;font-size:11.3px;line-height:16px;color:#4a4a4a;transform:translateX(-100%);">1,400 KWh</div><div class="t" style="left:152.5px;top:596.5px;font-size:11.3px;line-height:16px;color:#4a4a4a;transform:translateX(-100%);">1,600 KWh</div><svg style="position:absolute;left:974.6px;top:572.1px;overflow:visible;" width="10.8" height="14.6" viewBox="0 0 10.8 14.6"><g fill="none" stroke="#666" stroke-width="1"><path d="M0.6 0.6H6.8L10.2 3.6V14H0.6Z M6.8 0.6V3.6H10.2 M2.6 6H8.2 M2.6 8.6H8.2 M2.6 11.2H8.2"/></g></svg><svg style="position:absolute;left:995.8px;top:572.1px;overflow:visible;" width="13.9" height="14.6" viewBox="0 0 13.9 14.6"><g fill="none" stroke="#666" stroke-width="1"><path d="M0.8 8.4H2.6L4.6 0.8L6.6 10.8L8.2 5.8L9.6 8.4H12 M0.6 14H13.3"/></g></svg><svg style="position:absolute;left:1021.4px;top:572.1px;overflow:visible;" width="12.9" height="14.6" viewBox="0 0 12.9 14.6"><g fill="none" stroke="#666" stroke-width="1"><path d="M1.4 7H3.6V11.6H1.4Z M5.4 3.6H7.6V11.6H5.4Z M9.4 0.8H11.6V11.6H9.4Z M0.4 14H12.5"/></g></svg><svg style="position:absolute;left:1045.0px;top:572.1px;overflow:visible;" width="15.5" height="14.6" viewBox="0 0 15.5 14.6"><g fill="none" stroke="#666" stroke-width="1"><path d="M2.2 9.4Q0.6 2.4 7.6 1.2Q11.4 0.8 13.4 4 M13.6 0.8V4.2H10.2 M13.3 5.4Q14.9 12.2 7.9 13.4Q4.1 13.8 2.1 10.6 M1.9 13.8V10.4H5.3"/></g></svg><svg style="position:absolute;left:1070.0px;top:572.1px;overflow:visible;" width="13.6" height="14.6" viewBox="0 0 13.6 14.6"><g fill="none" stroke="#666" stroke-width="1"><path d="M6.8 0.4V10.6 M2.2 6L6.8 10.6L11.4 6 M0.6 10.4V14H13V10.4"/></g></svg></section><section class="share"><div class="panel" style="position:absolute;left:1128.0px;top:532.0px;width:364.5px;height:230.0px;"></div><div class="" style="position:absolute;left:1128.0px;top:532.0px;width:364.5px;height:33.7px;background:#eee;border-radius:6px/4px 6px/4px 0 0;"></div><svg style="position:absolute;left:1141.0px;top:540.0px;overflow:visible;" width="16" height="16" viewBox="0 0 16 16"><g fill="none" stroke="#409eff" stroke-width="1.4"><path d="M6.6 1.2A7 7 0 1 0 14.8 9.4"/><path d="M8.6 0.8V8H15.4A7 7 0 0 0 8.6 0.8Z" stroke-linejoin="round"/></g></svg><div class="t hd" style="left:1163.4px;top:541.1px;font-size:12.6px;line-height:18px;color:#262626;">能耗占比</div><div class="" style="position:absolute;left:1177.4px;top:584.2px;width:22.0px;height:12.0px;background:#62bffb;border-radius:3px;"></div><div class="t" style="left:1204.4px;top:582.7px;font-size:10.8px;line-height:15px;color:#444;">照明插座用电</div><div class="" style="position:absolute;left:1177.4px;top:606.2px;width:22.0px;height:12.0px;background:#fdca88;border-radius:3px;"></div><div class="t" style="left:1204.4px;top:604.7px;font-size:10.8px;line-height:15px;color:#444;">空调用电</div><div class="" style="position:absolute;left:1177.4px;top:628.2px;width:22.0px;height:12.0px;background:#b39ddb;border-radius:3px;"></div><div class="t" style="left:1204.4px;top:626.7px;font-size:10.8px;line-height:15px;color:#444;">动力用电</div><div class="" style="position:absolute;left:1177.4px;top:650.2px;width:22.0px;height:12.0px;background:#2ec5be;border-radius:3px;"></div><div class="t" style="left:1204.4px;top:648.7px;font-size:10.8px;line-height:15px;color:#444;">特殊用电</div><svg style="position:absolute;left:0;top:0;overflow:visible" width="1500" height="750"><path d="M1355.60 614.00A77.7 77.7 0 1 1 1287.91 729.84L1307.94 718.55A54.7 54.7 0 1 0 1355.60 637.00Z" fill="#62bffb"/><path d="M1287.91 729.84A77.7 77.7 0 0 1 1342.24 615.16L1346.20 637.81A54.7 54.7 0 0 0 1307.94 718.55Z" fill="#fdca88"/><path d="M1342.24 615.16A77.7 77.7 0 0 1 1355.06 614.00L1355.22 637.00A54.7 54.7 0 0 0 1346.20 637.81Z" fill="#b39ddb"/></svg></section>
</main>
<div class="leftline"></div>
</div>
<div class="sbtrack"></div><div class="sbthumb"></div>
<div class="wm">三水智能化案例实拍</div>
</body></html>
